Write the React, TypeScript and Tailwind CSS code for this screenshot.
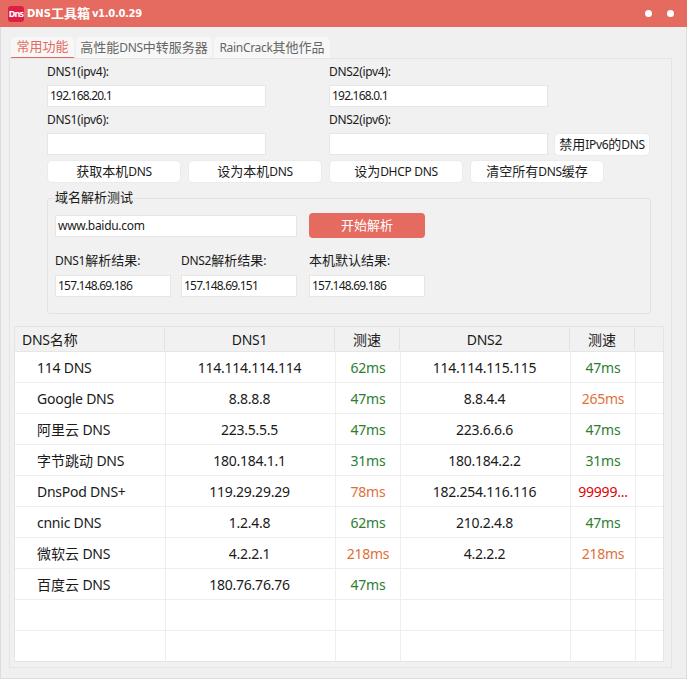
const rows = [
  { name: "114 DNS", dns1: "114.114.114.114", t1: "62ms", c1: "g", dns2: "114.114.115.115", t2: "47ms", c2: "g" },
  { name: "Google DNS", dns1: "8.8.8.8", t1: "47ms", c1: "g", dns2: "8.8.4.4", t2: "265ms", c2: "o" },
  { name: "阿里云 DNS", dns1: "223.5.5.5", t1: "47ms", c1: "g", dns2: "223.6.6.6", t2: "47ms", c2: "g" },
  { name: "字节跳动 DNS", dns1: "180.184.1.1", t1: "31ms", c1: "g", dns2: "180.184.2.2", t2: "31ms", c2: "g" },
  { name: "DnsPod DNS+", dns1: "119.29.29.29", t1: "78ms", c1: "o", dns2: "182.254.116.116", t2: "99999...", c2: "r" },
  { name: "cnnic DNS", dns1: "1.2.4.8", t1: "62ms", c1: "g", dns2: "210.2.4.8", t2: "47ms", c2: "g" },
  { name: "微软云 DNS", dns1: "4.2.2.1", t1: "218ms", c1: "o", dns2: "4.2.2.2", t2: "218ms", c2: "o" },
  { name: "百度云 DNS", dns1: "180.76.76.76", t1: "47ms", c1: "g", dns2: "", t2: "", c2: "g" },
  { name: "", dns1: "", t1: "", c1: "g", dns2: "", t2: "", c2: "g" },
  { name: "", dns1: "", t1: "", c1: "g", dns2: "", t2: "", c2: "g" },
];

const speedColor: Record<string, string> = {
  g: "text-[#2e7d32]",
  o: "text-[#e0703a]",
  r: "text-[#e00000]",
};

const rowCols = "grid grid-cols-[151px_170px_65px_170px_65px_27px]";
const headCols = "grid grid-cols-[150px_170px_65px_170px_65px_28px]";

// the chinese runs are a size bigger than the latin ones in this UI
function T({ children, big }: { children: string; big?: boolean }) {
  return (
    <>
      {children.split(/([\u4e00-\u9fff]+)/).map((part, i) =>
        !part ? null : /[\u4e00-\u9fff]/.test(part) ? (
          <span key={i} className={big ? "text-[14px]" : "text-[13px]"}>
            {part}
          </span>
        ) : (
          <span key={i} className={big ? "whitespace-pre text-[14px] tracking-[-0.25px]" : "whitespace-pre text-[12px] tracking-[-0.3px]"}>
            {part}
          </span>
        ),
      )}
    </>
  );
}

function Field({ value, className, wide }: { value?: string; className: string; wide?: boolean }) {
  return (
    <div
      className={`flex h-[22px] items-center border border-[#e6e6e6] bg-white pl-[2px] text-[12px] text-[#1a1a1a] ${
        wide ? "tracking-[-0.3px]" : "tracking-[-0.8px]"
      } ${className}`}
    >
      {value}
    </div>
  );
}

function Btn({ label, className }: { label: string; className: string }) {
  return (
    <div className={`flex h-[23px] items-center justify-center rounded-[5px] border border-[#ebebeb] bg-white text-[#1a1a1a] ${className}`}>
      <T>{label}</T>
    </div>
  );
}

function HeadCell({ label, left }: { label: string; left?: boolean }) {
  return (
    <div className={`my-[1px] flex items-center border-r border-[#e2e2e2] ${left ? "pl-[7px]" : "justify-center"}`}>
      <T big>{label}</T>
    </div>
  );
}

export default function App() {
  return (
    <div className="flex h-[679px] w-[687px] flex-col overflow-hidden bg-[#f0f0f0] font-['Noto_Sans','Noto_Sans_CJK_SC',sans-serif] text-[12px] text-[#1a1a1a]">
      <header className="flex h-[27px] shrink-0 items-center bg-[#e56b60] pl-[8px] pr-[13px]">
        <div className="flex size-[16px] items-center justify-center rounded-[3px] bg-[#dc1f47] text-[9px] font-bold tracking-[-0.8px] text-white">
          Dns
        </div>
        <div className="ml-[3px] flex items-center font-['DejaVu_Sans','Noto_Sans_CJK_SC',sans-serif] text-[10px] font-bold text-white">
          <span>DNS</span>
          <span className="text-[13px]">工具箱</span>
          <span className="ml-[2px] text-[10px] tracking-[-0.3px]">v1.0.0.29</span>
        </div>
        <div className="ml-auto flex gap-[15px]">
          <div className="size-[7px] rounded-full bg-white" />
          <div className="size-[7px] rounded-full bg-white" />
        </div>
      </header>

      <div className="flex flex-1 flex-col border-x border-b border-[#dcdcdc] pb-[10px] pl-[8px] pr-[14px]">
        <div className="mt-[10px] flex h-[21px] shrink-0 items-stretch pl-[2px]">
          <div className="flex w-[63px] items-center justify-center rounded-t-[5px] border-b border-[#e56b60] bg-[#f7f7f7] text-[#e56b60]">
            <T>常用功能</T>
          </div>
          <div className="ml-[2px] flex w-[136px] items-center justify-center rounded-t-[5px] bg-[#f7f7f7] text-[#666]">
            <T>高性能DNS中转服务器</T>
          </div>
          <div className="ml-[2px] flex w-[116px] items-center justify-center rounded-t-[5px] bg-[#f7f7f7] text-[#666]">
            <T>RainCrack其他作品</T>
          </div>
        </div>

        <main className="flex flex-1 flex-col border border-[#e4e4e4] bg-[#f1f1f1] pl-[4px] pr-[7px]">
          <div className="pl-[33px]">
            <div className="flex h-[26px] items-end pb-[4px]">
              <span className="w-[282px]"><T>DNS1(ipv4):</T></span>
              <span><T>DNS2(ipv4):</T></span>
            </div>
            <div className="flex">
              <Field value="192.168.20.1" className="w-[219px]" />
              <Field value="192.168.0.1" className="ml-[63px] w-[219px]" />
            </div>
            <div className="flex h-[26px] items-center">
              <span className="w-[282px]"><T>DNS1(ipv6):</T></span>
              <span><T>DNS2(ipv6):</T></span>
            </div>
            <div className="flex items-start">
              <Field className="w-[219px]" />
              <Field className="ml-[63px] w-[219px]" />
              <Btn label="禁用IPv6的DNS" className="ml-[6px] w-[96px]" />
            </div>
            <div className="mt-[4px] flex gap-[7px]">
              <Btn label="获取本机DNS" className="w-[134px]" />
              <Btn label="设为本机DNS" className="w-[134px]" />
              <Btn label="设为DHCP DNS" className="w-[134px]" />
              <Btn label="清空所有DNS缓存" className="w-[134px]" />
            </div>
            <section className="mt-[15px] h-[116px] w-[604px] rounded-[3px] border border-[#e2e2e2]">
              <div className="-mt-[10px] ml-[7px] h-[16px] leading-[16px]"><T>域名解析测试</T></div>
              <div className="mt-[8px] flex items-center pl-[7px]">
                <Field value="www.baidu.com" wide className="w-[242px]" />
                <div className="ml-[12px] flex h-[25px] w-[116px] items-center justify-center rounded-[4px] bg-[#e56b60] text-white">
                  <T>开始解析</T>
                </div>
              </div>
              <div className="mt-[15px] flex h-[16px] items-center pl-[7px]">
                <span className="w-[126px]"><T>DNS1解析结果:</T></span>
                <span className="w-[128px]"><T>DNS2解析结果:</T></span>
                <span><T>本机默认结果:</T></span>
              </div>
              <div className="mt-[6px] flex pl-[7px]">
                <Field value="157.148.69.186" className="w-[116px]" />
                <Field value="157.148.69.151" className="ml-[10px] w-[116px]" />
                <Field value="157.148.69.186" className="ml-[12px] w-[116px]" />
              </div>
            </section>
          </div>

          <div className="mt-[12px] w-[650px] border border-[#e4e4e4] bg-white">
            <div className={`${headCols} h-[25px] border-b border-[#e6e6e6] bg-[#f1f1f1]`}>
              <HeadCell label="DNS名称" left />
              <HeadCell label="DNS1" />
              <HeadCell label="测速" />
              <HeadCell label="DNS2" />
              <HeadCell label="测速" />
              <div />
            </div>
            {rows.map((row, i) => (
              <div
                key={i}
                className={`${rowCols} ${i < rows.length - 1 ? "h-[31px] border-b border-[#eeeeee]" : "h-[30px]"}`}
              >
                <div className="flex items-center border-r border-[#eeeeee] pl-[22px]"><T big>{row.name}</T></div>
                <div className="flex items-center justify-center border-r border-[#eeeeee] pr-[2px]"><T big>{row.dns1}</T></div>
                <div className={`flex items-center justify-center border-r border-[#eeeeee] ${speedColor[row.c1]}`}><T big>{row.t1}</T></div>
                <div className="flex items-center justify-center border-r border-[#eeeeee] pr-[2px]"><T big>{row.dns2}</T></div>
                <div className={`flex items-center justify-center border-r border-[#eeeeee] ${speedColor[row.c2]}`}><T big>{row.t2}</T></div>
                <div />
              </div>
            ))}
          </div>
        </main>
      </div>
    </div>
  );
}
